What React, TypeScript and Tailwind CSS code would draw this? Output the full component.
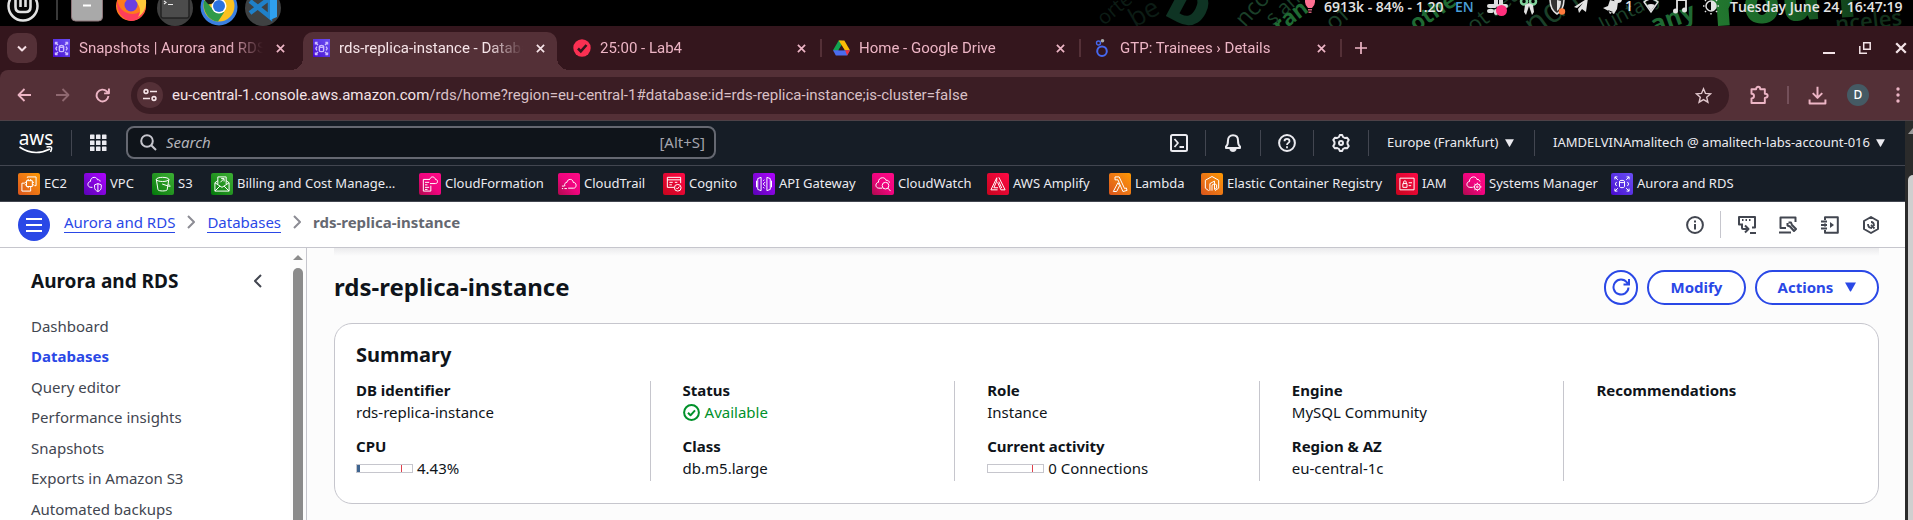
import type { ReactNode } from "react";

type IconProps = { className?: string; children: ReactNode; box?: string };

function Line({ className = "", children, box = "0 0 24 24" }: IconProps) {
  return (
    <svg
      viewBox={box}
      className={`shrink-0 ${className}`}
      fill="none"
      stroke="currentColor"
      strokeWidth="2"
      strokeLinecap="butt"
      strokeLinejoin="round"
      aria-hidden="true"
    >
      {children}
    </svg>
  );
}

/* ---------- service glyphs ---------- */

const rdsGlyph = (
  <>
    <ellipse cx="12" cy="9" rx="3" ry="1.4" />
    <path d="M9 9v6c0 .8 1.3 1.4 3 1.4s3-.6 3-1.4V9M3.5 6.500v-3h3M3.500 3.500l3.500 3.500M17.500 3.500h3v3M20.500 3.500l-3.500 3.500M3.500 17.500v3h3M3.500 20.500l3.500-3.500M20.500 17.500v3h-3M20.500 20.500l-3.500-3.500M5.500 9.500L4 12l1.500 2.500M18.500 9.500L20 12l-1.500 2.500" />
  </>
);

const glyphs: Record<string, ReactNode> = {
  EC2: (
    <>
      <path d="M9 8h7v7H9zM11 6v2M14 6v2M11 15v2M14 15v2M7 10h2M7 13h2M16 10h2M16 13h2M10 4.500V3.500h10.500v10.500h-2M7 11H3.500v9.500H14V17" />
    </>
  ),
  VPC: (
    <>
      <path d="M9 16H7c-2 0-3.500-1.500-3.500-3.500S5 9 6.500 9C6.500 6 8.500 4 11 4c2 0 3.500 1 4 3 2-.5 3 .5 3.200 2" />
      <path d="M15.500 11.500l4 1.500v3c0 2.500-1.500 4-4 5-2.500-1-4-2.500-4-5v-3zM15.500 11.500V21" />
    </>
  ),
  S3: (
    <>
      <ellipse cx="11.500" cy="6.500" rx="7.500" ry="2.500" />
      <path d="M4 6.500l2 12.500c1 1.800 10 1.800 11 0l2-12.500M11 12l9 3c1.200.2 1-1.200-1.500-2.500" />
    </>
  ),
  "Billing and Cost Management": (
    <>
      <path d="M7 12V3.500h10V12M10 10l4-4M11 5.500h3.500V9M3.500 10.500V20.500h17V10.500L12 16zM3.500 20.500l6-6M20.500 20.500l-6-6M3.500 10.500L7 8M20.500 10.500L17 8" />
    </>
  ),
  CloudFormation: (
    <>
      <path d="M4 6.500h8M4 6.500v14h9V14M6 10h5M6 13h3M6 16h5M6 18.500h3M12 11.500h6.500c1.500 0 2.500-1 2.500-2.500S20 6.500 18.500 6.500c-.5-2-2-3-3.500-3s-2.500 1-3 2.500" />
    </>
  ),
  CloudTrail: (
    <>
      <path d="M7 14.500c-1-3 1-4.500 2.500-4.500.5-2.500 2-3.500 4-3.500s3.500 1.500 3.500 3.500c2 0 3.500 1.500 3.500 3.500s-1 3.500-3 3.500H11M3.500 14.500h3M3.500 17.500h1.500M6.500 17.500h3" />
    </>
  ),
  Cognito: (
    <>
      <path d="M12 16H4V4h16v7M4 7h16M6.500 10h4M6.500 13h3M13 10h3" />
      <circle cx="16.500" cy="16.500" r="4" />
      <path d="M14.500 16.500l1.500 1.500 2.500-3" />
    </>
  ),
  "API Gateway": (
    <>
      <path d="M8.500 4L4.500 5.500v13l4 1.500zM15.500 4l4 1.500v13l-4 1.500zM3 8v8M21 8v8M11 8l1.500-1M11 16l1.500 1M13.500 9.500L11 12l2.500 2.500" />
    </>
  ),
  CloudWatch: (
    <>
      <path d="M11 17H7c-2 0-3.500-1.500-3.500-3.500S5 10 6.500 10C6.500 6.500 8.500 4.500 11.500 4.500c2 0 3.500 1 4 3 2.500-.2 4 1 4.200 3" />
      <circle cx="15" cy="14" r="4" />
      <path d="M18 17l3 3.500" />
    </>
  ),
  "AWS Amplify": (
    <>
      <path d="M10.500 4.500L3.500 19h8M10.500 4.500v4L7 16.500h5M13 4l7.500 15h-5L11.500 10" />
      <path d="M13 9l3.500 8" />
    </>
  ),
  Lambda: (
    <>
      <path d="M6 3.500h5l6.500 14 2-.8 1 3-5 1.300L9.500 7H6zM9.500 10.500L4 21h4l3.500-7z" />
    </>
  ),
  "Elastic Container Registry": (
    <>
      <path d="M8 20L4 17V7.500L12 3l8 4.500V17l-4.500 3M9.500 20v-8.500L15 8.500v3l-3 1.800V20M15 11.500l2.500 1.500v4L15 18.500z" />
    </>
  ),
  IAM: (
    <>
      <path d="M3.500 5h17v14h-17zM7 11.500h5v4.500H7zM8 11.500V9.500c0-1.800 3-1.800 3 0v2M14 10.500h4M14 14h3" />
    </>
  ),
  "Systems Manager": (
    <>
      <path d="M10.500 16H7c-2 0-3.500-1.500-3.500-3.500S5 9 6.500 9C6.500 6 8.500 3.500 11.500 3.500c2 0 3.500 1 4 3 2-.2 3.500 1 3.700 2.500" />
      <circle cx="16" cy="15.500" r="3.500" />
      <circle cx="16" cy="15.500" r="1" />
      <path d="M16 10.500V12M16 19v1.500M11 15.500h1.500M19.500 15.500H21M12.500 12l1 1M18.500 18l1 1M12.500 19l1-1M18.500 13l1-1" />
    </>
  ),
  "Aurora and RDS": rdsGlyph,
};

const orange = "bg-linear-to-tr from-[#d9541b] to-[#ff9900]";
const pink = "bg-linear-to-tr from-[#b0084d] via-[#f0047f] to-[#ff0b85]";
const green = "bg-linear-to-tr from-[#007a0a] to-[#3cb034]";
const purple = "bg-linear-to-tr from-[#5a00b8] to-[#b000ff]";
const red = "bg-linear-to-tr from-[#c8041c] to-[#ff0a45]";
const violet = "bg-linear-to-tr from-[#4a00d0] to-[#6a4df5]";

const favorites = [
  { name: "EC2", tint: orange, width: "w-[66px]" },
  { name: "VPC", tint: purple, width: "w-[68px]" },
  { name: "S3", tint: green, width: "w-[59px]" },
  { name: "Billing and Cost Management", tint: green, width: "w-[208px] pr-[18px]" },
  { name: "CloudFormation", tint: pink, width: "w-[139px]" },
  { name: "CloudTrail", tint: pink, width: "w-[105px]" },
  { name: "Cognito", tint: red, width: "w-[90px]" },
  { name: "API Gateway", tint: purple, width: "w-[119px]" },
  { name: "CloudWatch", tint: pink, width: "w-[115px]" },
  { name: "AWS Amplify", tint: red, width: "w-[122px]" },
  { name: "Lambda", tint: orange, width: "w-[92px]" },
  { name: "Elastic Container Registry", tint: orange, width: "w-[195px]" },
  { name: "IAM", tint: red, width: "w-[67px]" },
  { name: "Systems Manager", tint: pink, width: "w-[148px]" },
  { name: "Aurora and RDS", tint: violet, width: "w-[140px]" },
];

/* ---------- desktop panel ---------- */

function Wallpaper() {
  return (
    <svg
      viewBox="0 0 873 26"
      className="absolute top-0 right-0 h-[26px] w-[873px]"
      fontFamily="Open Sans, sans-serif"
      aria-hidden="true"
    >
      <defs>
        <linearGradient id="glow" x1="0" x2="1">
          <stop offset="0" stopColor="#237a30" />
          <stop offset="0.5" stopColor="#1a6428" />
          <stop offset="1" stopColor="#0f3b18" />
        </linearGradient>
      </defs>
      <g fill="#0c1c15">
        <text x="64" y="26" fontSize="20" transform="rotate(-40 64 26)">orte</text>
        <text x="95" y="28" fontSize="26" transform="rotate(-30 95 28)">be</text>
      </g>
      <text x="122" y="14" fontSize="56" fontWeight="800" fill="#0f3424" transform="rotate(28 122 14)">D</text>
      <g fill="#1b4029">
        <text x="205" y="28" fontSize="23" transform="rotate(-48 205 28)">ncor</text>
        <text x="233" y="26" fontSize="20" transform="rotate(-42 233 26)">s an</text>
        <text x="294" y="32" fontSize="24" transform="rotate(-42 294 32)">of</text>
        <text x="434" y="34" fontSize="22" transform="rotate(-38 434 34)">ot sea</text>
        <text x="494" y="38" fontSize="34" transform="rotate(-36 494 38)">nd r</text>
        <text x="564" y="32" fontSize="20" transform="rotate(-28 564 32)">luntary</text>
      </g>
      <g fill="#1f6a33" fontWeight="700">
        <text x="240" y="34" fontSize="22" transform="rotate(-38 240 34)">ran</text>
        <text x="376" y="32" fontSize="22" transform="rotate(-34 376 32)">othe</text>
        <text x="614" y="34" fontSize="25" transform="rotate(-20 614 34)">any</text>
      </g>
      <text x="664" y="27" fontSize="60" fontWeight="800" fill="url(#glow)" transform="rotate(-4 664 27)">You F</text>
      <text x="796" y="32" fontSize="22" fontWeight="600" fill="#12301b" transform="rotate(-6 796 32)">nceles</text>
    </svg>
  );
}

function DesktopPanel() {
  return (
    <div className="relative flex h-[26px] shrink-0 items-start justify-between overflow-hidden bg-black pr-[7px] pl-[6px] font-['Open_Sans','Noto_Sans',sans-serif]">
      <Wallpaper />
      <svg viewBox="0 0 276 26" className="relative h-[26px] w-[276px] shrink-0" aria-hidden="true">
        <circle cx="17" cy="6" r="14.500" fill="#050505" stroke="#e2e2e2" strokeWidth="2.500" />
        <path d="M9.500 0v7q0 5 5 5h5q5 0 5-5V0M14.500 7V0M19.500 7V0" fill="none" stroke="#e2e2e2" strokeWidth="2.600" />
        <path d="M51 0v20" stroke="#4c4c4c" strokeWidth="1.500" />
        <rect x="65.500" y="-10" width="31" height="31" rx="4" fill="#a9a9a9" stroke="#8c7478" />
        <path d="M77 5.500h8" stroke="#fff" strokeWidth="2" />
        <circle cx="125" cy="6" r="15" fill="#ff7a1c" />
        <path d="M111 0c-1 12 6 20 14 21 7 0 14-6 15-15-5 8-14 10-21 6-5-3-7-8-8-12z" fill="#ff3e5a" />
        <path d="M128 0l12 0c1 8-3 14-8 17 4-6 2-12-4-17z" fill="#ffc83a" />
        <circle cx="125" cy="5" r="6.500" fill="#6b3fe0" />
        <circle cx="169" cy="8" r="18" fill="#3f3f3f" />
        <rect x="155" y="-8" width="28" height="26" rx="2" fill="#4c4c4c" stroke="#232323" strokeWidth="1.500" />
        <path d="M158 1l2 1.500-2 1.500M162 4.500h5" stroke="#e8e8e8" fill="none" strokeWidth="1.200" />
        <circle cx="213" cy="7" r="18.500" fill="#3a7fe0" />
        <circle cx="213" cy="6" r="15.500" fill="#fbc11f" />
        <path d="M198 1c-2 10 5 20 14 20.500l6-9-5-4-8-1-5-7z" fill="#2f9a49" />
        <circle cx="213" cy="6" r="7.500" fill="#fff" />
        <circle cx="213" cy="6" r="6" fill="#2b72e0" />
        <path d="M197 -2h12c0 5-4 7-7 6z" fill="#1a1a1a" />
        <circle cx="257" cy="8" r="18" fill="#3f4142" />
        <path d="M244 1l20 16V-2L244 13" fill="none" stroke="#1f80c9" strokeWidth="4.500" />
        <path d="M264 -4l7 3v18l-7 3z" fill="#2fa0ee" />
      </svg>
      <div className="relative flex h-[12px] items-center text-[14px] font-semibold text-[#e4e4e4]">
        <svg viewBox="0 0 10 14" className="mr-[9px] h-[14px] w-[10px] shrink-0" aria-hidden="true">
          <path d="M0 0h10v3q0 3-3 6H3Q0 6 0 3z" fill="#ff6f91" />
          <path d="M3 10h4v1.500H3zM3.500 12.500h3V14h-3z" fill="#c85a75" />
        </svg>
        <span className="w-[131px] whitespace-nowrap">6913k - 84% - 1.20</span>
        <span className="w-[32px] text-[#4a9fd8]">EN</span>
        <svg viewBox="0 0 243 24" className="h-[24px] w-[243px] shrink-0" fill="#e2e2e2" aria-hidden="true">
          <g stroke="#dedede" strokeWidth="4" strokeLinecap="round">
            <path d="M9 6v4M2 12h6M2 17h3M9 17v2M14 6v4M12 12h7" />
          </g>
          <circle cx="14.500" cy="16.500" r="5.500" fill="#ff2f7c" />
          <g fill="none" stroke="#7fd09a" strokeWidth="2.500">
            <circle cx="37" cy="7.500" r="3" />
            <circle cx="46" cy="7.500" r="3" />
          </g>
          <path d="M38 11l4-2 4 2 1 7-2 3-3-9-3 9-2-3z" />
          <path d="M70 3c4 2 7 2 7 2 0 8-2 12-7 15-5-3-7-7-7-15 0 0 3 0 7-2z" fill="#333" stroke="#e2e2e2" strokeWidth="1.500" />
          <path d="M70 6v11c3-2 4-6 4-10z" />
          <circle cx="75" cy="17.500" r="3.200" fill="#ff7a3c" />
          <path d="M87 13L101 4l-2 14-4-3-3 4-1-4 5-6-6 5z" />
          <path d="M116 14l5-2 2-6 8 2-1 7-3 5zM121 16l2 4 3-2z" />
          <circle cx="131" cy="5" r="4" />
          <text x="138" y="17" fontSize="14" fontFamily="Open Sans, sans-serif">1</text>
          <path d="M157 8q7-6 14 0l-7 10z" fill="none" stroke="#e2e2e2" strokeWidth="1.500" />
          <path d="M160 11q4-2 8 0l-4 6z" />
          <path d="M190 16V6h9v9" fill="none" stroke="#e2e2e2" strokeWidth="1.800" />
          <circle cx="188.500" cy="17" r="2.500" />
          <circle cx="197.500" cy="16" r="2.500" />
          <circle cx="224" cy="12" r="5" fill="none" stroke="#e2e2e2" strokeWidth="1.500" />
          <path d="M224 7v10a5 5 0 000-10z" />
          <path d="M216 12h1.500M230.500 12h1.500M218 6l1 1M229 17l1 1M218 18l1-1M229 7l1-1M224 19v1.500" stroke="#e2e2e2" strokeWidth="1.500" />
        </svg>
        <span className="w-[176px] whitespace-nowrap">Tuesday June 24, 16:47:19</span>
      </div>
    </div>
  );
}

/* ---------- browser chrome ---------- */

function RdsFavicon() {
  return (
    <span className={`flex h-[18px] w-[17px] shrink-0 items-center justify-center ${violet}`}>
      <Line className="h-[17px] w-[17px] text-[#cdbcff]">{rdsGlyph}</Line>
    </span>
  );
}

const tabs = [
  { title: "Snapshots | Aurora and RDS |", icon: <RdsFavicon /> },
  { title: "rds-replica-instance - Databas", icon: <RdsFavicon />, active: true },
  {
    title: "25:00 - Lab4",
    icon: (
      <svg viewBox="0 0 18 18" className="h-[18px] w-[18px] shrink-0" aria-hidden="true">
        <circle cx="9" cy="9" r="8.700" fill="#fb3052" />
        <path d="M5 9.500l2.800 2.800L13.500 6" fill="none" stroke="#34161d" strokeWidth="2.600" />
      </svg>
    ),
  },
  {
    title: "Home - Google Drive",
    icon: (
      <svg viewBox="0 0 18 16" className="h-[16px] w-[17px] shrink-0" aria-hidden="true">
        <path d="M6 0h3v5L4 13 1 11 0 10.500z" fill="#12a350" />
        <path d="M6 0h6l6 10.500h-5.500z" fill="#fbbc05" />
        <path d="M0 10.500h18L15 16H3z" fill="#4a6cf0" />
        <path d="M12.800 10.500H18L15 16z" fill="#f0323c" />
        <path d="M9 5.300l3 5.200H6z" fill="#34161d" />
      </svg>
    ),
  },
  {
    title: "GTP: Trainees › Details",
    icon: (
      <svg viewBox="0 0 14 18" className="h-[18px] w-[18px] shrink-0" fill="none" aria-hidden="true">
        <circle cx="7" cy="12.200" r="4.800" stroke="#4668f0" strokeWidth="2" />
        <circle cx="3.500" cy="4" r="2" stroke="#4668f0" strokeWidth="1.400" />
        <circle cx="7.500" cy="1.800" r="1.800" fill="#aaa" />
      </svg>
    ),
  },
];

function CloseMark({ className }: { className: string }) {
  return (
    <svg viewBox="0 0 10 10" className={className} stroke="currentColor" strokeWidth="1.900" aria-hidden="true">
      <path d="M1 1l8 8M9 1l-8 8" />
    </svg>
  );
}

function TabStrip() {
  return (
    <div className="flex h-[44px] shrink-0 items-start bg-[#34161d] pt-[6px] pl-[7px] font-[Roboto,sans-serif] text-[#edb5c5]">
      <button
        aria-label="Search tabs"
        className="mt-px mr-[6px] flex h-[30px] w-[30px] items-center justify-center rounded-[10px] bg-[#543037] text-[#f6dfe5]"
      >
        <Line className="h-[12px] w-[12px]">
          <path d="M4 9l8 8 8-8" strokeWidth="4" />
        </Line>
      </button>
      {tabs.map((tab, i) => (
        <div
          key={tab.title}
          className={
            tab.active
              ? "relative mr-[6px] h-[38px] w-[254px] shrink-0 rounded-t-[10px] bg-[#543037] text-[#f6e4e8]"
              : "h-[38px] w-[260px] shrink-0"
          }
        >
          {tab.active && (
            <>
              <span className="absolute bottom-0 -left-[12px] h-[12px] w-[12px] bg-[radial-gradient(circle_at_0_0,transparent_12px,#543037_12px)]" />
              <span className="absolute -right-[12px] bottom-0 h-[12px] w-[12px] bg-[radial-gradient(circle_at_100%_0,transparent_12px,#543037_12px)]" />
            </>
          )}
          <div className="flex h-[32px] w-full items-center pl-[10px]">
            {tab.icon}
            <span className="ml-[9px] w-[184px] shrink-0 overflow-hidden text-[15px] leading-[22px] whitespace-nowrap [mask-image:linear-gradient(to_right,black_150px,transparent_184px)]">
              {tab.title}
            </span>
            <button aria-label={`Close ${tab.title}`} className="ml-[10px] flex h-[18px] w-[14px] shrink-0 items-center justify-center">
              <CloseMark className="h-[9px] w-[9px]" />
            </button>
            {i > 1 && <span className="ml-[12px] h-[18px] w-[2px] bg-[#543037]" />}
          </div>
        </div>
      ))}
      <button aria-label="New tab" className="ml-[11px] flex h-[32px] w-[14px] items-center justify-center">
        <svg viewBox="0 0 12 12" className="h-[12px] w-[12px]" stroke="currentColor" strokeWidth="1.700" aria-hidden="true">
          <path d="M6 0v12M0 6h12" />
        </svg>
      </button>
      <div className="ml-auto flex h-[32px] items-center gap-[24px] pr-[6px] text-[#f3e3e7]">
        <button aria-label="Minimize" className="flex h-[12px] w-[12px] items-end">
          <span className="h-[2px] w-full bg-current" />
        </button>
        <button aria-label="Restore">
          <svg viewBox="0 0 12 12" className="h-[12px] w-[12px]" fill="none" stroke="currentColor" strokeWidth="1.500" aria-hidden="true">
            <path d="M4.700 .8h6.500v6.500H4.700zM.8 4v7.200H8" />
          </svg>
        </button>
        <button aria-label="Close window">
          <CloseMark className="h-[12px] w-[12px]" />
        </button>
      </div>
    </div>
  );
}

function Toolbar() {
  return (
    <div className="shrink-0 bg-[#34161d]">
      <div className="flex h-[51px] items-center rounded-tl-[8px] border-b border-[#4d4147] bg-[#543037] pr-[10px] pl-[17px] text-[#edb5c5]">
        <button aria-label="Back" className="mr-[25px]">
          <Line className="h-[14px] w-[14px]" box="0 0 14 14">
            <path d="M14 7H1.500M7.500 1L1.500 7l6 6" strokeWidth="1.800" />
          </Line>
        </button>
        <button aria-label="Forward" className="mr-[25px] text-[#8f6870]">
          <Line className="h-[14px] w-[14px]" box="0 0 14 14">
            <path d="M0 7h12.500M6.500 1l6 6-6 6" strokeWidth="1.800" />
          </Line>
        </button>
        <button aria-label="Reload" className="mr-[21px]">
          <Line className="h-[15px] w-[15px]" box="0 0 14 14">
            <path d="M12.500 7.500A5.500 5.500 0 1111 3.200L12.500 5M13 0.500V5H8.500" strokeWidth="1.800" />
          </Line>
        </button>
        <div className="flex h-[37px] min-w-0 flex-1 items-center rounded-full bg-[#3b1d24] pr-[17px] pl-[6px]">
          <button aria-label="Site information" className="flex h-[26px] w-[26px] shrink-0 items-center justify-center rounded-full bg-[#543037] text-[#f6e4e8]">
            <Line className="h-[14px] w-[14px]" box="0 0 14 14">
              <circle cx="3" cy="3.500" r="1.900" strokeWidth="1.600" />
              <circle cx="11" cy="10.500" r="1.900" strokeWidth="1.600" />
              <path d="M7 3.500h7M0 10.500h7" strokeWidth="1.600" />
            </Line>
          </button>
          <p className="ml-[9px] flex-1 overflow-hidden font-[Roboto,sans-serif] text-[15px] leading-[24px] whitespace-nowrap text-[#d9c0c6]">
            <span className="text-[#f3e3e7]">eu-central-1.console.aws.amazon.com</span>
            /rds/home?region=eu-central-1#database:id=rds-replica-instance;is-cluster=false
          </p>
          <button aria-label="Bookmark this tab" className="text-[#e0c6cc]">
            <Line className="h-[17px] w-[17px]">
              <path d="M12 2.500l2.800 6.600 7.200.6-5.500 4.700 1.700 7-6.200-3.700-6.200 3.700 1.700-7L2 9.700l7.200-.6z" strokeLinejoin="miter" />
            </Line>
          </button>
        </div>
        <button aria-label="Extensions" className="ml-[20px]">
          <Line className="h-[20px] w-[20px]">
            <path d="M3 5h5.500c0-4 5-4 5 0H19v5.500c4.500 0 4.500 5 0 5V21.500H3v-5.500c4 0 4-5.500 0-5.500z" strokeWidth="2.300" />
          </Line>
        </button>
        <span className="ml-[18px] h-[18px] w-[2px] bg-[#74505a]" />
        <button aria-label="Downloads" className="ml-[19px]">
          <Line className="h-[19px] w-[19px]">
            <path d="M12 1v13M6 9l6 6 6-6M2 17v5h20v-5" strokeWidth="2.500" />
          </Line>
        </button>
        <button aria-label="Profile" className="ml-[20px] flex h-[22px] w-[22px] items-center justify-center rounded-full bg-[#455a64] text-[12px] font-medium text-white">
          D
        </button>
        <button aria-label="Browser menu" className="ml-[24px] flex w-[10px] justify-center">
          <svg viewBox="0 0 4 16" className="h-[16px] w-[4px]" fill="currentColor" aria-hidden="true">
            <circle cx="2" cy="2" r="1.700" />
            <circle cx="2" cy="8" r="1.700" />
            <circle cx="2" cy="14" r="1.700" />
          </svg>
        </button>
      </div>
    </div>
  );
}

/* ---------- console ---------- */

function Caret({ className }: { className: string }) {
  return (
    <svg viewBox="0 0 10 9" className={className} fill="currentColor" aria-hidden="true">
      <path d="M0 .3h10L5.500 8.300a.6.600 0 01-1 0z" />
    </svg>
  );
}

function Divider() {
  return <span className="h-[26px] w-px bg-[#424650]" />;
}

function ConsoleHeader() {
  return (
    <header className="flex h-[45px] items-center border-b border-[#424650] bg-[#161d26] pb-px pl-[19px] text-[#ebebf0]">
      <a href="#home" aria-label="AWS home" className="flex w-[34px] flex-col items-center">
        <span className="text-[19px] leading-[13px] text-white">aws</span>
        <svg viewBox="0 0 34 8" className="mt-px h-[8px] w-[34px]" fill="none" stroke="#fff" strokeWidth="1.600" aria-hidden="true">
          <path d="M.5 1C10 7.500 21 8 31 3M27.500 1c5-.8 6.500-.2 4 5" />
        </svg>
      </a>
      <span className="mr-[18px] ml-[18px] h-[26px] w-px bg-[#424650]" />
      <button aria-label="Services">
        <svg viewBox="0 0 17 17" className="h-[18px] w-[17px]" fill="currentColor" aria-hidden="true">
          {[0, 6, 12].map((x) => [0, 6, 12].map((y) => <rect key={`${x}-${y}`} x={x} y={y} width="4.500" height="4.500" rx=".6" />))}
        </svg>
      </button>
      <label className="ml-[19px] flex h-[33px] w-[590px] items-center rounded-[8px] border-2 border-[#656871] bg-[#0f141a] pr-[9px] pb-px pl-[12px]">
        <Line className="h-[17px] w-[17px] text-[#c6c6cd]" box="0 0 17 17">
          <circle cx="7" cy="7" r="5.800" />
          <path d="M11.200 11.200L16 16" />
        </Line>
        <span className="sr-only">Search</span>
        <input
          type="text"
          placeholder="Search"
          className="ml-[9px] min-w-0 flex-1 bg-transparent text-[15px] leading-[22px] outline-none placeholder:text-[#b4b4bb] placeholder:italic"
        />
        <span className="text-[15px] leading-[22px] text-[#a4a4ad]">[Alt+S]</span>
      </label>
      <div className="ml-auto flex items-center text-[13px]">
        <button aria-label="CloudShell" className="mr-[17px]">
          <Line className="h-[18px] w-[18px]" box="0 0 18 18">
            <rect x="1" y="1" width="16" height="16" rx="1.500" />
            <path d="M4.500 5l3.500 4-3.500 4M9.500 13h4.500" strokeWidth="1.800" />
          </Line>
        </button>
        <Divider />
        <button aria-label="Notifications" className="mx-[18px]">
          <Line className="h-[18px] w-[18px]" box="0 0 18 18">
            <path d="M2 14v-1.500c2-1.500 2-3 2-6C4 3 6 1.300 9 1.300S14 3 14 6.500c0 3 0 4.500 2 6V14zM6.500 15.500c1 2 4 2 5 0z" />
          </Line>
        </button>
        <Divider />
        <button aria-label="Help" className="mx-[17px]">
          <Line className="h-[18px] w-[18px]" box="0 0 18 18">
            <circle cx="9" cy="9" r="7.900" />
            <path d="M6.500 7.200C6.500 4 11.500 4 11.500 7.200c0 1.800-2.500 1.600-2.500 3.800M9 12.300v2" strokeWidth="1.800" />
          </Line>
        </button>
        <Divider />
        <button aria-label="Settings" className="mx-[18px]">
          <Line className="h-[18px] w-[18px]" box="0 0 18 18">
            <path d="M7 3l.8-2h2.400L11 3l1.800 1L15 3.700l1.700 2.200L15.500 8v2l1.200 2.100L15 14.300l-2.200-.3L11 15l-.8 2H7.800L7 15l-1.800-1-2.200.3-1.700-2.200L2.500 10V8L1.300 5.900 3 3.700l2.200.3z" />
            <circle cx="9" cy="9" r="2" />
          </Line>
        </button>
        <Divider />
        <button className="ml-[18px] flex w-[147px] items-center justify-between pr-[20px] whitespace-nowrap">
          Europe (Frankfurt)
          <Caret className="h-[8px] w-[9px]" />
        </button>
        <Divider />
        <button className="ml-[18px] flex items-center gap-[6px] pr-[20px] whitespace-nowrap">
          IAMDELVINAmalitech @ amalitech-labs-account-016
          <Caret className="h-[8px] w-[9px]" />
        </button>
      </div>
    </header>
  );
}

function FavoritesBar() {
  return (
    <nav aria-label="Favorites" className="flex h-[36px] items-center overflow-hidden border-b border-[#424650] bg-[#161d26] pl-[18px]">
      {favorites.map((item) => (
        <a key={item.name} href="#service" className={`flex shrink-0 items-center gap-[4px] text-[13px] text-[#ebebf0] ${item.width}`}>
          <span className={`flex h-[22px] w-[22px] shrink-0 items-center justify-center rounded-[2px] ${item.tint}`}>
            <svg viewBox="0 0 24 24" className="h-[20px] w-[20px]" fill="none" stroke="#fff" strokeWidth="1.200" aria-hidden="true">
              {glyphs[item.name]}
            </svg>
          </span>
          <span className={item.name.startsWith("Billing") ? "truncate" : "whitespace-nowrap"}>{item.name}</span>
        </a>
      ))}
    </nav>
  );
}

function BreadcrumbBar() {
  return (
    <div className="flex h-[46px] items-center border-b border-[#c6c6cd] bg-white pr-[25px] pl-[18px] text-[15px] leading-[22px]">
      <button aria-label="Open navigation" className="mr-[14px] flex h-[32px] w-[32px] items-center justify-center rounded-full bg-[#2a48e6] text-white">
        <Line className="h-[16px] w-[16px]" box="0 0 16 16">
          <path d="M0 2h16M0 8h16M0 14h16" />
        </Line>
      </button>
      <nav aria-label="Breadcrumb" className="flex items-center pb-[5px]">
        <a href="#rds" className="border-b border-[#2a48e6] leading-[20px] text-[#2a48e6]">Aurora and RDS</a>
        <Line className="mx-[12px] h-[14px] w-[8px] text-[#8c8c94]" box="0 0 8 14">
          <path d="M1 1l6 6-6 6" />
        </Line>
        <a href="#databases" className="border-b border-[#2a48e6] leading-[20px] text-[#2a48e6]">Databases</a>
        <Line className="mx-[12px] h-[14px] w-[8px] text-[#8c8c94]" box="0 0 8 14">
          <path d="M1 1l6 6-6 6" />
        </Line>
        <span className="font-bold text-[#656871]">rds-replica-instance</span>
      </nav>
      <div className="ml-auto flex items-center text-[#424650]">
        <button aria-label="Info">
          <Line className="h-[18px] w-[18px]" box="0 0 18 18">
            <circle cx="9" cy="9" r="7.900" />
            <path d="M9 8v5.500M9 4.500v2" />
          </Line>
        </button>
        <span className="mr-[17px] ml-[16px] h-[27px] w-px bg-[#c6c6cd]" />
        <button aria-label="Command shortcut">
          <Line className="h-[18px] w-[18px]" box="0 0 18 18">
            <path d="M3 8.500H1V1h16v10.500h-3M4 4h1.500M7.500 4H9M11 4h1.500M4 7.500V12q0 1 1 1h5M7 9.500l3.500 3.500L7 16.500M12 17h6" />
          </Line>
        </button>
        <button aria-label="Tools" className="ml-[23px]">
          <Line className="h-[18px] w-[18px]" box="0 0 18 18">
            <path d="M7 12H1.500V1.500h15V6M0 16.500h12M8.500 7v2.500l2.500 1 4 4.500 2-2-4-4-1-2.500H9.500" />
          </Line>
        </button>
        <button aria-label="Notebook" className="ml-[24px]">
          <Line className="h-[18px] w-[18px]" box="0 0 18 18">
            <path d="M4 4V1.200h12.800v15.600H4V14M4 7.500v3M0 5.500h6M0 9h6M0 12.500h6" />
            <path d="M9 6v6l4-3z" fill="currentColor" stroke="none" />
          </Line>
        </button>
        <button aria-label="Amazon Q" className="ml-[23px]">
          <Line className="h-[18px] w-[18px]" box="0 0 18 18">
            <path d="M9 1l7 4v8l-7 4-7-4V5z" />
            <path d="M12.500 12.500L9 9M6 8c0 2.500 1.500 4 4 4M12 10c0-2.500-1-4-3-4" strokeWidth="1.800" />
          </Line>
        </button>
      </div>
    </div>
  );
}

const sideLinks = [
  "Dashboard",
  "Databases",
  "Query editor",
  "Performance insights",
  "Snapshots",
  "Exports in Amazon S3",
  "Automated backups",
];

function Sidebar() {
  return (
    <aside className="flex w-[307px] shrink-0 border-r border-[#c6c6cd] bg-white">
      <div className="flex-1 pl-[31px]">
        <div className="flex items-center justify-between pt-[21px] pr-[28px]">
          <h2 className="text-[19px] leading-[24px] font-bold text-[#0f141a]">Aurora and RDS</h2>
          <button aria-label="Close navigation" className="text-[#424650]">
            <Line className="h-[14px] w-[9px]" box="0 0 9 14">
              <path d="M8 1L2 7l6 6" />
            </Line>
          </button>
        </div>
        <ul className="mt-[18px] text-[15px] text-[#424650]">
          {sideLinks.map((link) => (
            <li key={link} className="leading-[30px] whitespace-nowrap even:mb-px">
              <a href="#section" className={link === "Databases" ? "font-bold text-[#2a48e6]" : ""}>
                {link}
              </a>
            </li>
          ))}
        </ul>
      </div>
      <div className="flex w-[16px] flex-col items-center bg-[#fcfcfc] pt-[7px]" aria-hidden="true">
        <svg viewBox="0 0 10 5" className="h-[5px] w-[10px] shrink-0" fill="#8b8b8b">
          <path d="M5 0l5 5H0z" />
        </svg>
        <span className="mt-[8px] w-[10px] flex-1 rounded-t-full bg-[#8b8b8b]" />
      </div>
    </aside>
  );
}

function Meter({ fill }: { fill: number }) {
  return (
    <span className="mr-[4px] flex h-[9px] w-[57px] items-stretch border border-[#c6c6cd] bg-white">
      <span className="w-[44px]">
        <span className="block h-full bg-[#3f6590]" style={{ width: `${fill}px` }} />
      </span>
      <span className="w-px bg-[#e0404c]" />
    </span>
  );
}

const columns: { label: string; value: ReactNode }[][] = [
  [
    { label: "DB identifier", value: "rds-replica-instance" },
    { label: "CPU", value: <><Meter fill={3} />4.43%</> },
  ],
  [
    {
      label: "Status",
      value: (
        <span className="flex items-center text-[#00912a]">
          <Line className="mr-[5px] h-[17px] w-[17px]" box="0 0 17 17">
            <circle cx="8.500" cy="8.500" r="7.400" />
            <path d="M5 8.800l2.500 2.500 4.500-5" />
          </Line>
          Available
        </span>
      ),
    },
    { label: "Class", value: "db.m5.large" },
  ],
  [
    { label: "Role", value: "Instance" },
    { label: "Current activity", value: <><Meter fill={0} />0 Connections</> },
  ],
  [
    { label: "Engine", value: "MySQL Community" },
    { label: "Region & AZ", value: "eu-central-1c" },
  ],
  [{ label: "Recommendations", value: "" }],
];

const pill = "flex h-[35px] items-center justify-center rounded-full border-2 border-[#2a48e6] bg-white pb-px text-[15px] font-bold text-[#2a48e6]";

function Content() {
  return (
    <main className="relative min-w-0 flex-1 bg-[#fcfcfc] pr-[26px] pl-[27px]">
      <div className="absolute top-0 right-[26px] left-[27px] h-[8px] bg-linear-to-b from-[#ebebed] to-[#fcfcfc]" />
      <div className="relative flex items-start justify-between pt-[22px]">
        <h1 className="text-[24px] leading-[33px] font-bold text-[#0f141a]">rds-replica-instance</h1>
        <div className="flex gap-[9px]">
          <button aria-label="Refresh" className={`w-[34px] ${pill}`}>
            <Line className="h-[18px] w-[18px]" box="0 0 18 18">
              <path d="M16.500 9.500A7.500 7.500 0 1115 4.500l1.500 1.500M17 1v5.500h-5.500" strokeLinejoin="miter" />
            </Line>
          </button>
          <button className={`w-[99px] ${pill}`}>Modify</button>
          <button className={`w-[124px] gap-[12px] ${pill}`}>
            Actions
            <Caret className="h-[10px] w-[11px]" />
          </button>
        </div>
      </div>
      <section className="mt-[18px] rounded-[18px] border border-[#c6c6cd] bg-white px-[10px] pt-[17px] pb-[22px]">
        <h2 className="pl-[11px] text-[20px] leading-[28px] font-bold text-[#0f141a]">Summary</h2>
        <div className="mt-[12px] grid grid-cols-5 text-[15px] text-[#0f141a]">
          {columns.map((fields, i) => (
            <dl key={fields[0].label} className={i === 0 ? "pb-[2px] pl-[11px]" : "border-l border-[#c6c6cd] pb-[2px] pl-[32px]"}>
              {fields.map((field, row) => (
                <div key={field.label} className={row === 0 ? "mb-[14px]" : ""}>
                  <dt className="mb-[2px] leading-[18px] font-bold">{field.label}</dt>
                  <dd className="flex h-[22px] items-center leading-[22px]">{field.value}</dd>
                </div>
              ))}
            </dl>
          ))}
        </div>
      </section>
    </main>
  );
}

export default function App() {
  return (
    <div className="flex h-screen flex-col overflow-hidden bg-[#34161d] font-['Noto_Sans',sans-serif]">
      <DesktopPanel />
      <TabStrip />
      <Toolbar />
      <div className="flex min-h-0 flex-1">
        <div className="flex min-w-0 flex-1 flex-col">
          <ConsoleHeader />
          <FavoritesBar />
          <BreadcrumbBar />
          <div className="flex min-h-0 flex-1 overflow-hidden">
            <Sidebar />
            <Content />
          </div>
        </div>
        <div className="flex w-[8px] shrink-0 flex-col items-end overflow-hidden bg-[#2b2b2b] pt-[7px]" aria-hidden="true">
          <svg viewBox="0 0 5 6" className="h-[6px] w-[5px] shrink-0" fill="#9b9b9b">
            <path d="M5 0v6H0z" />
          </svg>
          <span className="mt-[41px] w-[5px] flex-1 rounded-tl-[5px] bg-[#cfcfcf]" />
        </div>
      </div>
    </div>
  );
}
